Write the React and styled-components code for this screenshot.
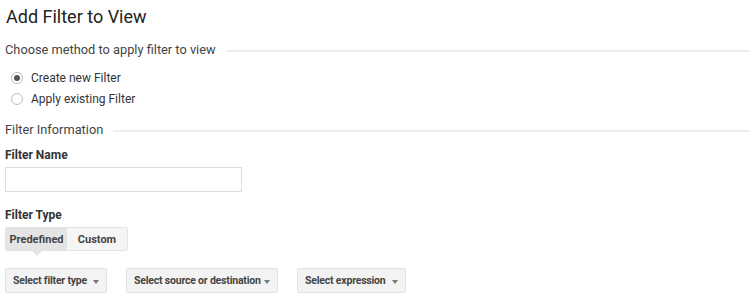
import React, { useState } from 'react';
import styled, { createGlobalStyle } from 'styled-components';

const GlobalStyle = createGlobalStyle`
  body {
    margin: 0;
    background: #fff;
    font-family: Roboto, "Liberation Sans", Arial, sans-serif;
    color: #333;
  }
`;

const Page = styled.div`
  padding: 5px 0 0 5px;
  width: 745px;
`;

const Title = styled.h1`
  margin: 0 0 0 1px;
  font-size: 18px;
  font-weight: 400;
  line-height: 24px;
  color: #222;
`;

const Section = styled.div`
  display: flex;
  align-items: center;
  gap: 10px;
  margin-top: ${(p) => p.$top}px;
  font-size: 12.8px;
  color: #444;
  line-height: 18px;

  &::after {
    content: '';
    flex: 1;
    height: 1px;
    border-top: 1px solid #eaeaea;
    background: #f2f2f2;
    margin-top: 2px;
  }
`;

const RadioList = styled.div`
  display: flex;
  flex-direction: column;
  gap: 5px;
  margin: 11px 0 0 6px;
`;

const RadioRow = styled.label`
  display: flex;
  align-items: center;
  gap: 8px;
  font-size: 12px;
  color: #333;
  line-height: 16px;
  cursor: pointer;
`;

const RadioDot = styled.span`
  width: 10px;
  height: 10px;
  border-radius: 50%;
  border: 1px solid #bdbdbd;
  background: #fff;
  display: flex;
  align-items: center;
  justify-content: center;

  &::after {
    content: '';
    width: 6px;
    height: 6px;
    border-radius: 50%;
    background: ${(p) => (p.$on ? '#555' : 'transparent')};
  }
`;

const Label = styled.div`
  font-size: 12px;
  font-weight: 700;
  color: #333;
  margin-top: ${(p) => p.$top}px;
  line-height: 16px;
`;

const TextInput = styled.input`
  display: block;
  box-sizing: border-box;
  width: 237px;
  height: 25px;
  margin-top: 4px;
  border: 1px solid #dcdcdc;
  padding: 0 6px;
  font: inherit;
  outline: none;
`;

const Toggle = styled.div`
  display: flex;
  margin-top: 4px;
  width: fit-content;
  border: 1px solid #e3e3e3;
  border-radius: 2px;
`;

const ToggleBtn = styled.button`
  position: relative;
  width: ${(p) => p.$w}px;
  height: 22px;
  border: none;
  background: ${(p) => (p.$active ? '#e4e4e4' : '#f5f5f5')};
  font-family: inherit;
  font-size: 11px;
  font-weight: 700;
  color: #444;
  padding: 0;
  cursor: pointer;

  &::after {
    display: ${(p) => (p.$active ? 'block' : 'none')};
    content: '';
    position: absolute;
    left: 50%;
    bottom: -6px;
    margin-left: -6px;
    border-left: 6px solid transparent;
    border-right: 6px solid transparent;
    border-top: 6px solid #e4e4e4;
  }
`;

const SelectRow = styled.div`
  display: flex;
  gap: 19px;
  margin-top: 17px;
`;

const Select = styled.button`
  display: flex;
  align-items: center;
  justify-content: space-between;
  box-sizing: border-box;
  width: ${(p) => p.$w}px;
  height: 25px;
  padding: 0 7px 0 7px;
  background: #f3f3f3;
  border: 1px solid #e2e2e2;
  border-radius: 2px;
  font-family: inherit;
  font-size: 10.5px;
  font-weight: 700;
  letter-spacing: -0.2px;
  white-space: nowrap;
  color: #444;
  cursor: pointer;

  &::after {
    content: '';
    margin-top: 2px;
    border-left: 3.5px solid transparent;
    border-right: 3.5px solid transparent;
    border-top: 4px solid #777;
  }
`;

export default function App() {
  const [method, setMethod] = useState('new');
  const [type, setType] = useState('predefined');

  return (
    <Page>
      <GlobalStyle />
      <Title>Add Filter to View</Title>
      <Section $top={12}>Choose method to apply filter to view</Section>
      <RadioList>
        <RadioRow onClick={() => setMethod('new')}>
          <RadioDot $on={method === 'new'} />
          Create new Filter
        </RadioRow>
        <RadioRow onClick={() => setMethod('existing')}>
          <RadioDot $on={method === 'existing'} />
          Apply existing Filter
        </RadioRow>
      </RadioList>
      <Section $top={14}>Filter Information</Section>
      <Label $top={8}>Filter Name</Label>
      <TextInput type="text" />
      <Label $top={15}>Filter Type</Label>
      <Toggle>
        <ToggleBtn $w={61} $active={type === 'predefined'} onClick={() => setType('predefined')}>
          Predefined
        </ToggleBtn>
        <ToggleBtn $w={60} $active={type === 'custom'} onClick={() => setType('custom')}>
          Custom
        </ToggleBtn>
      </Toggle>
      <SelectRow>
        <Select $w={102}>Select filter type</Select>
        <Select $w={152}>Select source or destination</Select>
        <Select $w={109}>Select expression</Select>
      </SelectRow>
    </Page>
  );
}
